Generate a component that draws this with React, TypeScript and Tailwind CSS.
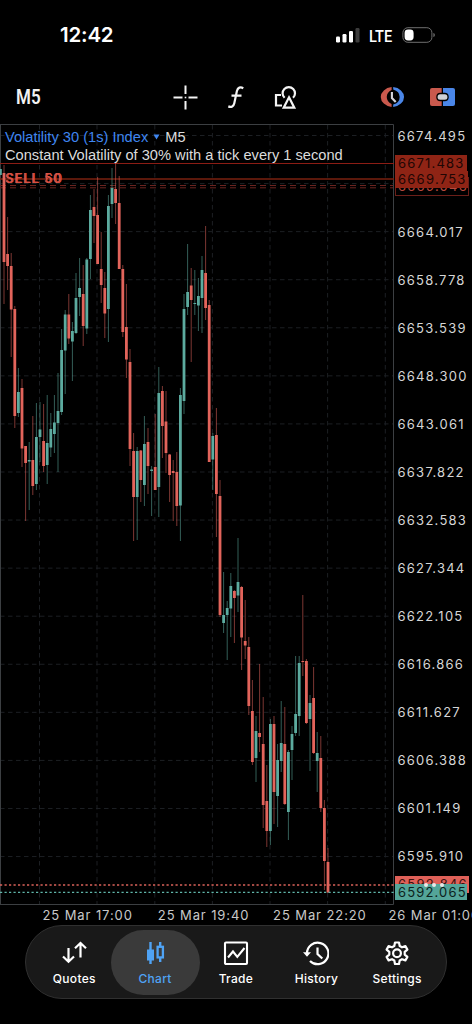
import React from 'react';

type Candle = [string, number, number, number, number];

// [direction, wick top, body top, body bottom, wick bottom]
const CANDLES: Candle[] = [
  ['d', 165, 173, 262, 304], ['d', 217, 254, 266, 290], ['d', 253, 266, 309.5, 357], ['d', 306, 309, 416, 428],
  ['u', 368, 392, 413, 417], ['d', 379, 388, 448.5, 467], ['d', 446, 446, 463, 521], ['u', 442, 460, 461.5, 510],
  ['d', 416, 460, 486, 495], ['u', 403, 437, 484, 490], ['u', 402, 429.5, 437, 462], ['d', 404, 441, 466, 472],
  ['u', 395, 443, 465, 484], ['u', 413, 429, 447.5, 457], ['u', 395, 422.5, 434, 453], ['u', 373, 411, 423, 472],
  ['u', 329, 350, 412, 415], ['u', 310, 314.5, 350.5, 394], ['d', 294, 314.5, 338.5, 344], ['u', 322, 331, 341.5, 381],
  ['u', 273, 298, 333, 334], ['u', 258, 288, 297, 316], ['d', 265, 294, 326, 346], ['u', 258, 259.5, 328.5, 334],
  ['u', 195, 210, 259, 279], ['d', 189, 207, 216, 243], ['d', 177, 215, 264, 264], ['d', 232, 269, 285, 303],
  ['d', 272, 288, 313.5, 338], ['u', 195, 206, 309, 342], ['u', 168, 188, 204, 218], ['d', 163, 189, 203, 224],
  ['d', 176, 203, 269, 269], ['d', 265, 269, 332, 337], ['d', 284, 327, 359.5, 378], ['d', 349, 362, 449, 466],
  ['d', 433, 451, 497, 541], ['u', 447, 451, 497, 540], ['d', 450, 450.5, 480, 502], ['u', 416, 444, 485, 506],
  ['d', 428, 442, 466, 494], ['u', 466, 469.5, 471, 516], ['d', 414, 467, 490, 490], ['u', 367, 393, 487, 517],
  ['d', 386, 391, 426, 458], ['d', 391, 421.5, 453, 473], ['d', 454, 454.5, 475, 502], ['d', 460, 471, 473, 521],
  ['d', 452, 472, 506, 526], ['u', 388, 395, 505.5, 541], ['u', 294, 309, 401, 414], ['u', 244, 292, 307, 315],
  ['d', 268, 285.5, 300, 362], ['u', 270, 303, 304, 315], ['u', 278, 296, 305.5, 331], ['u', 256, 270, 298, 333],
  ['d', 226, 273, 308, 320], ['d', 300, 305, 462, 462], ['u', 433, 436, 459.5, 490], ['d', 408, 435, 494, 537],
  ['d', 480, 496, 615, 617], ['u', 572, 615, 623, 633], ['u', 601, 608, 615, 660], ['u', 573, 586, 608.5, 637],
  ['d', 590, 591, 598, 643], ['u', 538, 582, 595.5, 612], ['d', 586, 587, 637.5, 670], ['d', 600, 641, 645.5, 659],
  ['d', 637, 647, 706, 715], ['d', 680, 711, 762, 765], ['u', 716, 731, 758, 782], ['d', 664, 733, 737, 752],
  ['d', 697, 744, 805, 828], ['d', 765, 801, 831, 847], ['u', 719, 724, 831, 845], ['d', 716, 724, 792, 824],
  ['u', 744, 760, 796, 827], ['u', 701, 743, 761, 772], ['d', 707, 744, 804, 805], ['u', 750, 752, 812, 840],
  ['u', 726, 734, 750, 780], ['u', 656, 714, 733, 736], ['u', 656, 663, 716, 736], ['d', 595, 661, 662, 676],
  ['d', 659, 661, 723, 724], ['u', 695, 703, 719, 771], ['d', 667, 698, 753, 754], ['u', 732, 753, 761, 792],
  ['d', 736, 758, 808, 812], ['d', 800, 808, 861, 890], ['d', 848, 862, 892.5, 893],
];

const PRICES = [
  '6674.495', '', '6664.017', '6658.778', '6653.539', '6648.300', '6643.061', '6637.822',
  '6632.583', '6627.344', '6622.105', '6616.866', '6611.627', '6606.388', '6601.149', '6595.910',
];

const TIMES = ['25 Mar 17:00', '25 Mar 19:40', '25 Mar 22:20', '26 Mar 01:00'];

const StatusBar = () => (
  <div className="h-[70px] shrink-0 flex items-center justify-between pl-[60px] pr-[37px]">
    <span className="text-[20.5px] font-semibold tracking-[-0.2px] leading-none">12:42</span>
    <div className="flex items-center">
      <svg width="24" height="16" viewBox="0 0 24 16" fill="#fff">
        <rect x="0" y="9.5" width="4" height="6" rx="1.2" />
        <rect x="6.5" y="7" width="4" height="8.5" rx="1.2" />
        <rect x="13" y="4" width="4" height="11.5" rx="1.2" />
        <rect x="19.5" y="1" width="4" height="14.5" rx="1.2" fill="#3c3c3c" />
      </svg>
      <span className="ml-[9px] mt-[3px] w-[25px] origin-left scale-x-[0.91] font-[Roboto] text-[16px] font-medium leading-none">LTE</span>
      <svg className="ml-[8px]" width="33" height="16" viewBox="0 0 33 16">
        <rect x="0.9" y="0.7" width="29" height="14.6" rx="5" fill="none" stroke="#6e6e6e" strokeWidth="1" />
        <rect x="2.6" y="2.6" width="9" height="10.8" rx="3.4" fill="#fff" />
        <path d="M31.400 6v4c1-.3 1.4-1 1.4-2s-.4-1.700-1.400-2z" fill="#6e6e6e" />
      </svg>
    </div>
  </div>
);

const Toolbar = () => (
  <div className="h-[54px] shrink-0 flex items-center pl-[16px] pr-[17px]">
    <span className="w-[157px] origin-left scale-x-[0.83] font-[Roboto] text-[20.5px] font-semibold leading-none text-[#f2f2f2]">M5</span>
    <svg width="25" height="25" viewBox="0 0 25 25" fill="none" stroke="#f4f4f4" strokeWidth="2">
      <path d="M.5 12.500h9M15.500 12.500h9M12.500.5v8.500M12.500 16v8.500" />
      <rect x="11.700" y="11.700" width="1.600" height="1.600" fill="#f4f4f4" stroke="none" />
    </svg>
    <svg className="ml-[29px]" width="18" height="24" viewBox="0 0 18 24" fill="none" stroke="#f4f4f4" strokeWidth="2.200">
      <path d="M16.300 3.200C13.400 1.700 10.800 2.300 9.900 6L7.300 18.200c-.7 3.200-2.900 4.400-6 3.200M4.500 10.700h10" />
    </svg>
    <svg className="ml-[29px]" width="23" height="25" viewBox="0 0 23 25" fill="none" stroke="#f4f4f4" strokeWidth="2.200">
      <path d="M7 10H2v10.500h6M10.600 12.800A6.200 6.200 0 1 1 19 12.800" />
      <path d="M15 12.300l5.300 10.400H9.700z" />
    </svg>
    <div className="ml-auto flex items-center gap-[24px]">
      <svg width="26" height="22" viewBox="0 0 26 22">
        <path d="M11.600 1A12.600 10.100 0 0 0 11.600 21V18A9.400 8 0 0 1 11.600 4z" fill="#c9594d" />
        <path d="M13.200 1A12.600 10.100 0 0 1 13.200 21V18.600A9.400 8 0 0 0 13.200 3.400z" fill="#4a86e8" />
        <path d="M11.900 6v6l3.800 4" fill="none" stroke="#d5d5dc" strokeWidth="2.100" />
      </svg>
      <svg width="25" height="18" viewBox="0 0 25 18">
        <path d="M2 0h9.700v18H2a2 2 0 0 1-2-2V2a2 2 0 0 1 2-2z" fill="#c9594d" />
        <path d="M13 0h10a2 2 0 0 1 2 2v14a2 2 0 0 1-2 2H13z" fill="#4a86e8" />
        <rect x="6.300" y="4.800" width="12.400" height="8.400" rx="4" fill="#000" />
        <rect x="7.600" y="6.200" width="9.800" height="5.600" rx="2.500" fill="#cfd0d6" />
      </svg>
    </div>
  </div>
);

const CandleChart = () => (
  <svg className="block shrink-0" width="394" height="781" viewBox="0 124 394 781">
    <g stroke="#1c1f23" strokeWidth="1" strokeDasharray="4.500 3.500">
      {PRICES.map((_, i) => (
        <line key={i} x1="0" x2="393" y1={135.5 + i * 48.07} y2={135.5 + i * 48.07} />
      ))}
      {[39.5, 97, 154.8, 212.4, 270, 327.6, 385.3].map((x) => (
        <line key={x} x1={x} x2={x} y1="125" y2="905" />
      ))}
    </g>
    <path d="M0 124.500H393.500V904.500H0M.5 125V904" fill="none" stroke="#3c3f42" />

    {/* position levels */}
    <line x1="0" x2="394" y1="163.500" y2="163.500" stroke="#8c1d15" />
    <line x1="0" x2="394" y1="179" y2="179" stroke="#7a210f" strokeWidth="1.600" />
    <line x1="0" x2="393" y1="185.500" y2="185.500" stroke="#6b2420" strokeDasharray="6 4" />
    <line x1="0" x2="393" y1="187.800" y2="187.800" stroke="#6b2420" strokeDasharray="6 4" />

    <rect x="0" y="169" width="1.800" height="6" fill="#5aa99e" />
    {CANDLES.map(([dir, high, top, bottom, low], i) => {
      const x = 4 + i * 3.6;
      const color = dir === 'u' ? '#5cab9f' : '#e2645b';
      return (
        <g key={i} fill={color}>
          <rect x={x - 0.5} y={high} width="1" height={low - high} opacity="0.55" />
          <rect x={x - 1.4} y={top} width="2.8" height={bottom - top} />
        </g>
      );
    })}

    {/* bid and ask */}
    <line x1="0" x2="394" y1="885" y2="885" stroke="#d9625a" strokeWidth="1.300" strokeDasharray="2.200 2.300" />
    <line x1="0" x2="394" y1="892.300" y2="892.300" stroke="#5fb5a9" strokeWidth="1.300" strokeDasharray="2.200 2.300" />
  </svg>
);

const ChartPanel = () => (
  <div className="relative h-[781px] shrink-0 flex">
    <CandleChart />
    <div className="flex flex-col text-[13px] tracking-[1.250px] text-[#d6d6d6] pl-[3.500px] -mt-[12px]">
      {PRICES.map((price, i) => (
        <span key={i} className="h-[48.070px] shrink-0 flex items-center leading-none">{price}</span>
      ))}
    </div>

    <div className="absolute left-[5px] top-[4px] font-['Liberation_Sans'] text-[14.650px] leading-[18px] whitespace-nowrap text-[#dcdcdc]">
      <div className="flex items-center">
        <span className="text-[#3f86f0]">Volatility 30 (1s) Index</span>
        <svg className="mx-[5px]" width="7" height="6" viewBox="0 0 7 6"><path d="M.5.5h6L3.500 5.500z" fill="#3f86f0" /></svg>
        <span>M5</span>
      </div>
      <div>Constant Volatility of 30% with a tick every 1 second</div>
    </div>
    <div className="absolute left-[5px] top-[48px] text-[12.500px] font-medium leading-[13px] tracking-[1.200px] text-[#e0594c]">SELL 50</div>
    <div className="absolute left-[6px] top-[47.500px] text-[12.500px] font-medium leading-[13px] tracking-[1.200px] text-[#d65043]">SELL 60</div>

    {/* price tags */}
    <div className="absolute left-[395px] top-[53px] w-[74px] h-[19px] border border-[#6b1f19] pl-[2px] pt-[1px] text-[13px] leading-[15px] tracking-[1.250px] text-[#b6493d]">6669.046</div>
    <div className="absolute left-[395px] top-[31px] w-[72px] h-[17px] bg-[#8f2415] pl-[3px] text-[13px] leading-[17px] tracking-[1.200px] text-[#200604]">6671.483</div>
    <div className="absolute left-[395px] top-[47px] w-[73px] h-[17px] bg-[#8f2415] pl-[3px] text-[13px] leading-[17px] tracking-[1.250px] text-[#200604]">6669.753</div>
    <div className="absolute left-[395px] top-[752px] w-[74px] h-[17px] bg-[#df6058] pl-[3px] text-[13px] leading-[17px] tracking-[1.250px] text-[#3a100d]">6592.846</div>
    <div className="absolute left-[395px] top-[760px] w-[72px] h-[16px] bg-[#54a599] pl-[3px] text-[13px] leading-[16px] tracking-[1.150px] text-[#0c1f1c]">6592.065</div>
    <div className="absolute left-[424px] top-[759px] flex gap-[4px]">
      <span className="size-[4px] rounded-full bg-[#e8e8e8]" />
      <span className="size-[4px] rounded-full bg-[#e8e8e8]" />
      <span className="size-[4px] rounded-full bg-[#e8e8e8]" />
    </div>
  </div>
);

const TimeAxis = () => (
  <div className="h-[20px] shrink-0 flex pl-[42.500px] text-[13px] leading-[20px] tracking-[0.900px] text-[#c8c8c8] overflow-hidden">
    {TIMES.map((time) => (
      <span key={time} className="w-[115.300px] shrink-0 whitespace-nowrap">{time}</span>
    ))}
  </div>
);

const QuotesIcon = () => (
  <svg width="26" height="26" viewBox="0 0 26 26" fill="none" stroke="currentColor" strokeWidth="2.200">
    <path d="M7.500 8v13.500M2 16.500l5.500 5.300 5.500-5.300M19.500 17.500V3M14 8.300L19.500 3 25 8.300" />
  </svg>
);

const ChartIcon = () => (
  <svg width="26" height="26" viewBox="0 0 26 26" fill="none" stroke="currentColor" strokeWidth="2.400">
    <path d="M8.500 2v22M18.200 2v4.500M18.200 17.500v4.500" />
    <rect x="5" y="9.500" width="7" height="11" fill="currentColor" stroke="none" />
    <rect x="15.600" y="6.800" width="5.300" height="10.600" strokeWidth="2.300" />
  </svg>
);

const TradeIcon = () => (
  <svg width="26" height="26" viewBox="0 0 26 26" fill="none" stroke="currentColor" strokeWidth="2.100">
    <rect x="2" y="2.500" width="22" height="21.500" rx="1" />
    <path d="M5 17.500l5-6 4.300 5.300L21.500 8" />
  </svg>
);

const HistoryIcon = () => (
  <svg width="26" height="26" viewBox="0 0 26 26" fill="none" stroke="currentColor" strokeWidth="2.200">
    <path d="M4 13.500A10.700 10.700 0 1 1 7 20.900" />
    <path d="M0 12.200h8L4 16.700z" fill="currentColor" stroke="none" />
    <path d="M14.500 7.500v6.500l4.800 4.500" />
  </svg>
);

const SettingsIcon = () => (
  <svg width="26" height="26" viewBox="0 0 26 26" fill="none" stroke="currentColor" strokeWidth="2.200" strokeLinejoin="round">
    <path d="M11 2.500h4l.7 3.500 2.300 1.300 3.400-1.200 2 3.500-2.700 2.300v2.700l2.700 2.300-2 3.500-3.400-1.200-2.300 1.300-.7 3.500h-4l-.7-3.500L8 19.200l-3.400 1.200-2-3.500 2.700-2.300v-2.700L2.600 9.600l2-3.500L8 7.300 10.300 6z" />
    <circle cx="13" cy="13.300" r="3.900" />
  </svg>
);

const TABS = [
  { label: 'Quotes', icon: <QuotesIcon /> },
  { label: 'Chart', icon: <ChartIcon />, active: true },
  { label: 'Trade', icon: <TradeIcon /> },
  { label: 'History', icon: <HistoryIcon /> },
  { label: 'Settings', icon: <SettingsIcon /> },
];

const TabBar = () => (
  <nav className="mx-[25px] h-[74px] shrink-0 flex items-center pl-[8px] rounded-full bg-[#191919] border border-[#303030]">
    {TABS.map(({ label, icon, active }) => (
      <div
        key={label}
        className={
          active
            ? 'w-[89px] -mx-[4px] h-[65px] shrink-0 flex flex-col items-center pt-[10px] rounded-full bg-[#3a3a3a] text-[#4fa3f5]'
            : 'w-[80.600px] h-[65px] shrink-0 flex flex-col items-center pt-[10px] text-white'
        }
      >
        {icon}
        <span className="mt-[6px] text-[12px] font-medium leading-[14px] tracking-[0.300px] whitespace-nowrap">{label}</span>
      </div>
    ))}
  </nav>
);

export default function App() {
  return (
    <div className="w-[472px] h-[1024px] flex flex-col overflow-hidden bg-black font-[Inter,sans-serif] text-white">
      <StatusBar />
      <Toolbar />
      <ChartPanel />
      <TimeAxis />
      <TabBar />
    </div>
  );
}
